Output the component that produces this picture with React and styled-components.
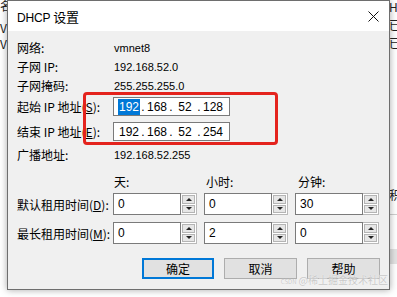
import React from 'react';
import styled, { createGlobalStyle } from 'styled-components';

const GlobalStyle = createGlobalStyle`
  html, body {
    margin: 0;
    padding: 0;
    background: #ffffff;
    overflow: hidden;
  }
  body {
    font-family: "Liberation Sans", "Noto Sans CJK SC", sans-serif;
    color: #000;
  }
`;

const Page = styled.div`
  position: relative;
  width: 397px;
  height: 297px;
  overflow: hidden;
  background: #fff;
`;

const Backdrop = styled.div`
  display: flex;
  justify-content: space-between;
  height: 100%;
  font-size: 12px;
  color: #222;
`;

const BackStrip = styled.div`
  display: flex;
  flex-direction: column;
  width: ${(p) => p.width}px;
  white-space: nowrap;
  overflow: hidden;
  font-family: "Noto Sans CJK SC", sans-serif;
  font-size: 12px;
`;

const BackLine = styled.div`
  height: ${(p) => p.h || 18}px;
  line-height: ${(p) => p.lh || p.h || 18}px;
  margin-top: ${(p) => p.mt || 0}px;
  border-bottom: ${(p) => (p.rule ? '1px solid #cfcfcf' : 'none')};
  background: ${(p) => p.bg || 'transparent'};
`;

const Dialog = styled.div`
  position: absolute;
  left: 7px;
  top: 0;
  width: 381px;
  height: 288px;
  background: #f0f0f0;
  border: 1px solid #6e6e6e;
  box-shadow: 0 0 7px rgba(0, 0, 0, 0.35);
  display: flex;
  flex-direction: column;
`;

const TitleBar = styled.div`
  height: 30px;
  background: #fff;
  display: flex;
  align-items: center;
  justify-content: space-between;
  padding: 0 9px 0 9px;
  font-size: 12px;
`;

const Title = styled.span`
  font-family: "Liberation Sans", "Noto Sans CJK SC", sans-serif;
  font-size: 12px;
  letter-spacing: -0.2px;

  b {
    font-weight: normal;
    font-family: "Noto Sans CJK SC", sans-serif;
    font-size: 13px;
  }
`;

const CloseIcon = styled.svg`
  width: 11px;
  height: 11px;
  margin-right: 1px;
`;

const Body = styled.div`
  position: relative;
  flex: 1;
  padding: 7px 9px 0 9px;
  display: flex;
  flex-direction: column;
`;

const Row = styled.div`
  display: flex;
  align-items: center;
  height: ${(p) => p.h || 19}px;
  margin-top: ${(p) => p.mt || 0}px;
`;

const Label = styled.div`
  width: 96px;
  flex-shrink: 0;
  font-family: "Noto Sans CJK SC", sans-serif;
  font-size: 12px;
  line-height: 19px;
  white-space: nowrap;

  u {
    text-underline-offset: 1px;
  }
`;

const Value = styled.div`
  padding-left: 1px;
  font-family: "Liberation Sans", sans-serif;
  font-size: 11px;
`;

const IpBox = styled.div`
  box-sizing: border-box;
  width: 117px;
  height: 19px;
  background: #fff;
  border: 1px solid #7a7a7a;
  display: flex;
  align-items: center;
  padding-left: 4px;
  font-family: "Liberation Sans", sans-serif;
  font-size: 12px;
`;

const Octet = styled.span`
  width: 22px;
  text-align: center;

  em {
    font-style: normal;
    background: ${(p) => (p.selected ? '#0078d7' : 'transparent')};
    color: ${(p) => (p.selected ? '#fff' : '#000')};
    padding: 1px 1px;
  }
`;

const Dot = styled.span`
  width: 6px;
  text-align: center;
`;

const SpinGroup = styled.div`
  display: flex;
  gap: 7px;
`;

const Heading = styled.div`
  width: 84px;
  font-family: "Noto Sans CJK SC", sans-serif;
  font-size: 12px;
  padding-left: 1px;
`;

const Spin = styled.div`
  display: flex;
  width: 84px;
  height: 22px;
`;

const SpinInput = styled.div`
  box-sizing: border-box;
  width: 68px;
  height: 22px;
  background: #fff;
  border: 1px solid #7a7a7a;
  padding: 2px 0 0 4px;
  font-family: "Liberation Sans", sans-serif;
  font-size: 12px;
  line-height: 16px;
`;

const SpinButtons = styled.div`
  box-sizing: border-box;
  width: 16px;
  height: 22px;
  border: 1px solid #b9b9b9;
  border-left: none;
  background: #fff;
  display: flex;
  flex-direction: column;
  padding: 1px;
  gap: 1px;
`;

const SpinButton = styled.div`
  flex: 1;
  background: #e6e6e6;
  border: 1px solid #b4b4b4;
  display: flex;
  align-items: center;
  justify-content: center;

  &::after {
    content: '';
    border-left: 3px solid transparent;
    border-right: 3px solid transparent;
    ${(p) =>
      p.down ? 'border-top: 3px solid #222;' : 'border-bottom: 3px solid #222;'}
  }
`;

const ButtonRow = styled.div`
  display: flex;
  justify-content: flex-end;
  gap: 10px;
  margin-top: 14px;
`;

const Button = styled.button`
  box-sizing: border-box;
  width: ${(p) => p.w || 73}px;
  height: 21px;
  padding: 0;
  background: #e1e1e1;
  border: 1px solid ${(p) => (p.primary ? '#0078d7' : '#adadad')};
  box-shadow: ${(p) => (p.primary ? 'inset 0 0 0 1px #0078d7' : 'none')};
  font-family: "Noto Sans CJK SC", sans-serif;
  font-size: 12px;
  color: #000;
`;

const Highlight = styled.div`
  position: absolute;
  left: 75px;
  top: 61px;
  width: 195px;
  height: 53px;
  box-sizing: border-box;
  border: 3px solid #e4231d;
  border-radius: 4px;
  pointer-events: none;
`;

const Watermark = styled.div`
  position: absolute;
  right: 1px;
  bottom: 2px;
  font-family: "Noto Sans CJK SC", sans-serif;
  font-size: 10px;
  line-height: 10px;
  color: #c9c9c9;
  text-shadow: 0 0 1px #fff;
  white-space: nowrap;

  small {
    font-size: 6px;
    margin-right: 2px;
  }
`;

const IpField = ({ parts, selectFirst }) => (
  <IpBox>
    {parts.map((p, i) => (
      <React.Fragment key={i}>
        {i > 0 && <Dot>.</Dot>}
        <Octet selected={selectFirst && i === 0}>
          <em>{p}</em>
        </Octet>
      </React.Fragment>
    ))}
  </IpBox>
);

const SpinBox = ({ value }) => (
  <Spin>
    <SpinInput>{value}</SpinInput>
    <SpinButtons>
      <SpinButton />
      <SpinButton down />
    </SpinButtons>
  </Spin>
);

const App = () => {
  return (
    <Page>
      <GlobalStyle />
      <Backdrop>
        <BackStrip width={7}>
          <BackLine h={12}>名称</BackLine>
          <BackLine h={14} mt={9}>VMnet1</BackLine>
          <BackLine h={17}>VMnet8</BackLine>
        </BackStrip>
        <BackStrip width={8}>
          <BackLine h={14}>Host</BackLine>
          <BackLine h={18} mt={2}>已连接</BackLine>
          <BackLine h={18}>已连接</BackLine>
          <BackLine h={29} lh={20} mt={133} rule>积</BackLine>
          <BackLine h={15} mt={34} bg="#e3e3e3" />
        </BackStrip>
      </Backdrop>

      <Dialog>
        <TitleBar>
          <Title>
            DHCP <b>设置</b>
          </Title>
          <CloseIcon viewBox="0 0 11 11">
            <path d="M0.5 0.5 L10.5 10.5 M10.5 0.5 L0.5 10.5" stroke="#111" strokeWidth="1" fill="none" />
          </CloseIcon>
        </TitleBar>

        <Body>
          <Row>
            <Label>网络:</Label>
            <Value>vmnet8</Value>
          </Row>
          <Row>
            <Label>子网 IP:</Label>
            <Value>192.168.52.0</Value>
          </Row>
          <Row>
            <Label>子网掩码:</Label>
            <Value>255.255.255.0</Value>
          </Row>

          <Row mt={2}>
            <Label>
              起始 IP 地址(<u>S</u>):
            </Label>
            <IpField parts={['192', '168', '52', '128']} selectFirst />
          </Row>
          <Row mt={6}>
            <Label>
              结束 IP 地址(<u>E</u>):
            </Label>
            <IpField parts={['192', '168', '52', '254']} />
          </Row>

          <Row mt={4}>
            <Label>广播地址:</Label>
            <Value>192.168.52.255</Value>
          </Row>

          <Row mt={8}>
            <Label />
            <SpinGroup>
              <Heading>天:</Heading>
              <Heading>小时:</Heading>
              <Heading>分钟:</Heading>
            </SpinGroup>
          </Row>
          <Row h={22} mt={2}>
            <Label>
              默认租用时间(<u>D</u>):
            </Label>
            <SpinGroup>
              <SpinBox value="0" />
              <SpinBox value="0" />
              <SpinBox value="30" />
            </SpinGroup>
          </Row>
          <Row h={22} mt={7}>
            <Label>
              最长租用时间(<u>M</u>):
            </Label>
            <SpinGroup>
              <SpinBox value="0" />
              <SpinBox value="2" />
              <SpinBox value="0" />
            </SpinGroup>
          </Row>

          <ButtonRow>
            <Button primary w={72}>确定</Button>
            <Button>取消</Button>
            <Button>帮助</Button>
          </ButtonRow>

          <Highlight />
        </Body>
        <Watermark>
          <small>CSDN</small>@稀土掘金技术社区
        </Watermark>
      </Dialog>
    </Page>
  );
};

export default App;
